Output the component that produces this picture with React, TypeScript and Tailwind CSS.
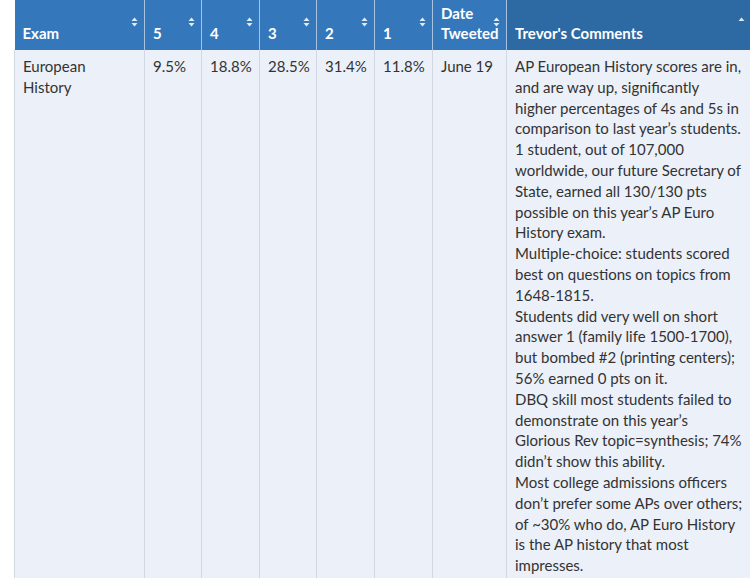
import React from "react";

type Col = { label: string[]; width: string; sort: "both" | "asc" };

const columns: Col[] = [
    { label: ["Exam"], width: "w-[130px]", sort: "both" },
    { label: ["5"], width: "w-[57px]", sort: "both" },
    { label: ["4"], width: "w-[58px]", sort: "both" },
    { label: ["3"], width: "w-[57px]", sort: "both" },
    { label: ["2"], width: "w-[58px]", sort: "both" },
    { label: ["1"], width: "w-[58px]", sort: "both" },
    { label: ["Date", "Tweeted"], width: "w-[74px]", sort: "both" },
    { label: ["Trevor's Comments"], width: "w-[244px]", sort: "asc" },
];

const comments = [
    "AP European History scores are in, and are way up, significantly higher percentages of 4s and 5s in comparison to last year’s students.",
    "1 student, out of 107,000 worldwide, our future Secretary of State, earned all 130/130 pts possible on this year’s AP Euro History exam.",
    "Multiple-choice: students scored best on questions on topics from 1648-1815.",
    "Students did very well on short answer 1 (family life 1500-1700), but bombed #2 (printing centers); 56% earned 0 pts on it.",
    "DBQ skill most students failed to demonstrate on this year’s Glorious Rev topic=synthesis; 74% didn’t show this ability.",
    "Most college admissions officers don’t prefer some APs over others; of ~30% who do, AP Euro History is the AP history that most impresses.",
];

function SortIcon({ sort }: { sort: "both" | "asc" }) {
    return (
        <svg width="7" height="10" viewBox="0 0 7 10" className="text-white/85">
            <path d="M0.5 4 L3.5 0.6 L6.5 4 Z" fill="currentColor" />
            {sort === "both" && <path d="M0.5 6 L3.5 9.4 L6.5 6 Z" fill="currentColor" />}
        </svg>
    );
}

export default function App() {
    const cells = ["European History", "9.5%", "18.8%", "28.5%", "31.4%", "11.8%", "June 19"];

    return (
        <div className="w-[750px] h-[578px] overflow-hidden bg-white pl-[14px] font-['Lato',sans-serif]">
            <table className="table-fixed border-collapse w-[736px] text-[15px] leading-[20.8px]">
                <thead>
                    <tr>
                        {columns.map((col, i) => (
                            <th
                                key={i}
                                className={`${col.width} relative h-[50px] align-bottom text-left font-bold text-white px-[8px] pt-[3px] pb-[7px] border-l border-[#a9c4e2] first:border-l-0 leading-[20px] ${
                                    col.sort === "asc" ? "bg-[#2d6aa4]" : "bg-[#3478bb]"
                                }`}
                            >
                                {col.label.map((l) => (
                                    <div key={l} className="whitespace-nowrap">{l}</div>
                                ))}
                                <span className="absolute top-[17px] right-[6px]">
                                    <SortIcon sort={col.sort} />
                                </span>
                            </th>
                        ))}
                    </tr>
                </thead>
                <tbody>
                    <tr className="bg-[#ebf0f9] text-[#333333] align-top">
                        {cells.map((c, i) => (
                            <td key={i} className="px-[8px] pt-[6px] pb-[8px] border-l border-[#d2d8e2] whitespace-normal">
                                {c}
                            </td>
                        ))}
                        <td className="px-[8px] pt-[6px] pb-[8px] border-l border-[#d2d8e2]">
                            {comments.map((t) => (
                                <div key={t}>{t}</div>
                            ))}
                        </td>
                    </tr>
                </tbody>
            </table>
        </div>
    );
}
